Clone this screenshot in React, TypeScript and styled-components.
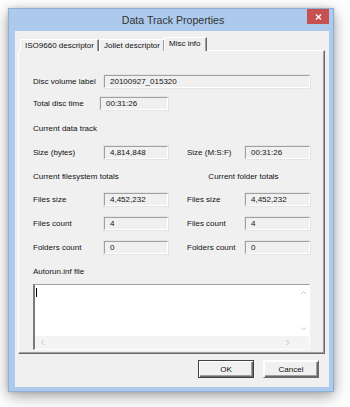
import React from "react";
import styled, { createGlobalStyle } from "styled-components";

const Global = createGlobalStyle`
  html, body { margin: 0; padding: 0; background: #ffffff; }
  body { width: 350px; height: 407px; overflow: hidden; font-family: "Liberation Sans", Arial, sans-serif; }
  #root { width: 350px; height: 407px; }
`;

const Page = styled.div`
  width: 350px;
  height: 407px;
  padding: 8px 0 0 8px;
  box-sizing: border-box;
`;

const Window = styled.div`
  width: 326px;
  height: 384px;
  box-sizing: border-box;
  background: #adcaec;
  border: 1px solid #8fb0d6;
  padding: 0 4px 4px 6px;
  display: flex;
  flex-direction: column;
  box-shadow: 0 4px 14px rgba(0, 0, 0, 0.38), 0 0 3px rgba(0, 0, 0, 0.15);
`;

const TitleBar = styled.div`
  height: 22px;
  display: grid;
  grid-template-columns: 1fr auto 1fr;
  align-items: start;
  flex-shrink: 0;
`;

const Title = styled.div`
  grid-column: 2;
  font-family: "Liberation Sans", Arial, sans-serif;
  font-size: 10.6px;
  color: #333333;
  line-height: 22px;
  padding-left: 2px;
`;

const CloseButton = styled.div`
  grid-column: 3;
  justify-self: end;
  width: 22px;
  height: 15px;
  background: #c75050;
  display: flex;
  align-items: center;
  justify-content: center;
`;

const Client = styled.div`
  flex: 1;
  background: #f0f0f0;
  display: flex;
  flex-direction: column;
  padding: 6px 4px 0 3px;
`;

const TabRow = styled.div`
  display: flex;
  align-items: flex-end;
  height: 14px;
  padding-left: 2px;
  position: relative;
  z-index: 1;
  margin-bottom: -1px;
`;

const Tab = styled.div<{ $active?: boolean }>`
  box-sizing: border-box;
  height: ${(p) => (p.$active ? "14px" : "12px")};
  padding: ${(p) => (p.$active ? "1px 5px 0 4px" : "1px 4px 0 4px")};
  margin-left: ${(p) => (p.$active ? "-1px" : "0")};
  font-size: 8px;
  line-height: 10px;
  color: #111;
  background: #f0f0f0;
  border-top: 1px solid #ffffff;
  border-left: 1px solid #ffffff;
  border-right: 1px solid #696969;
  box-shadow: inset -1px 0 0 #a0a0a0;
  white-space: nowrap;
`;

const Panel = styled.div`
  box-sizing: border-box;
  height: 304px;
  border-top: 1px solid #ffffff;
  border-left: 1px solid #ffffff;
  border-right: 1px solid #696969;
  border-bottom: 1px solid #696969;
  box-shadow: inset -1px -1px 0 #a0a0a0;
  padding: 0 14px 0 14px;
  display: flex;
  flex-direction: column;
`;

const Line = styled.div<{ $mt: number }>`
  margin-top: ${(p) => p.$mt}px;
  display: grid;
  grid-template-columns: 71px 64px 19px 58px 65px;
  align-items: center;
  height: 13px;
`;

const Label = styled.div<{ $col?: number }>`
  grid-column: ${(p) => p.$col ?? 1};
  font-size: 8px;
  color: #111;
  white-space: nowrap;
`;

const Heading = styled.div<{ $center?: boolean }>`
  grid-column: ${(p) => (p.$center ? "4 / 6" : "1 / 3")};
  text-align: ${(p) => (p.$center ? "center" : "left")};
  padding-right: ${(p) => (p.$center ? "10px" : "0")};
  font-size: 8px;
  color: #111;
  white-space: nowrap;
`;

const Field = styled.div<{ $col?: number; $span?: number; $shift?: number; $w?: number }>`
  grid-column: ${(p) => `${p.$col ?? 2} / span ${p.$span ?? 1}`};
  margin-left: ${(p) => p.$shift ?? 0}px;
  ${(p) => (p.$w ? `width: ${p.$w}px;` : "")}
  box-sizing: border-box;
  height: 13px;
  border-top: 1px solid #a0a0a0;
  border-left: 1px solid #a0a0a0;
  border-right: 1px solid #ffffff;
  border-bottom: 1px solid #ffffff;
  box-shadow: 0 0 0 0.5px #d8d8d8;
  background: #f0f0f0;
  font-size: 8px;
  line-height: 11px;
  padding-left: 5px;
  color: #111;
  white-space: nowrap;
`;

const Memo = styled.div`
  margin-top: 6px;
  box-sizing: border-box;
  width: 277px;
  height: 66px;
  border-top: 1px solid #a0a0a0;
  border-left: 2px solid #7a7a7a;
  border-right: 1px solid #ffffff;
  border-bottom: 1px solid #ffffff;
  display: grid;
  grid-template-columns: 1fr 12px;
  grid-template-rows: 1fr 13px;
  background: #ffffff;
`;

const MemoText = styled.div`
  padding: 3px 0 0 1px;
`;

const Caret = styled.div`
  width: 1px;
  height: 9px;
  background: #000;
`;

const VScroll = styled.div`
  display: flex;
  flex-direction: column;
  justify-content: space-between;
  align-items: center;
  padding: 5px 0 4px;
  background: #ffffff;
`;

const HScroll = styled.div`
  grid-column: 1 / 3;
  display: flex;
  justify-content: space-between;
  align-items: center;
  padding: 0 18px 0 5px;
  background: #f4f4f4;
`;

const ButtonRow = styled.div`
  display: flex;
  justify-content: flex-end;
  gap: 9px;
  padding: 6px 6px 0 0;
`;

const Button = styled.div<{ $default?: boolean }>`
  box-sizing: border-box;
  width: 56px;
  height: 18px;
  display: flex;
  align-items: center;
  justify-content: center;
  font-size: 8px;
  color: #111;
  background: #f0f0f0;
  border: 1px solid;
  box-shadow: inset 1px 1px 0 #ffffff, inset -1px -1px 0 #696969, inset -2px -2px 0 #a0a0a0;
  border-top-color: ${(p) => (p.$default ? "#404040" : "#ffffff")};
  border-left-color: ${(p) => (p.$default ? "#404040" : "#ffffff")};
  border-right-color: ${(p) => (p.$default ? "#404040" : "#696969")};
  border-bottom-color: ${(p) => (p.$default ? "#404040" : "#696969")};
`;

const Chevron = ({ dir }: { dir: "up" | "down" | "left" | "right" }) => {
  const d =
    dir === "up"
      ? "M1 4 L3.5 1.5 L6 4"
      : dir === "down"
      ? "M1 1.5 L3.5 4 L6 1.5"
      : dir === "left"
      ? "M4 1 L1.5 3.5 L4 6"
      : "M1.5 1 L4 3.5 L1.5 6";
  const w = dir === "up" || dir === "down" ? 7 : 6;
  const h = dir === "up" || dir === "down" ? 6 : 7;
  return (
    <svg width={w} height={h} viewBox={`0 0 ${w} ${h}`}>
      <path d={d} fill="none" stroke="#c4c4c4" strokeWidth="1" />
    </svg>
  );
};

export default function App() {
  return (
    <Page>
      <Global />
      <Window>
        <TitleBar>
          <Title>Data Track Properties</Title>
          <CloseButton>
            <svg width="7" height="6" viewBox="0 0 7 6">
              <path d="M1 0.5 L6 5.5 M6 0.5 L1 5.5" stroke="#ffffff" strokeWidth="1.4" />
            </svg>
          </CloseButton>
        </TitleBar>
        <Client>
          <TabRow>
            <Tab>ISO9660 descriptor</Tab>
            <Tab>Joliet descriptor</Tab>
            <Tab $active>Misc info</Tab>
          </TabRow>
          <Panel>
            <Line $mt={24}>
              <Label>Disc volume label</Label>
              <Field $col={2} $span={4}>20100927_015320</Field>
            </Line>
            <Line $mt={9}>
              <Label>Total disc time</Label>
              <Field $shift={-4} $w={68}>00:31:26</Field>
            </Line>
            <Line $mt={12}>
              <Heading>Current data track</Heading>
            </Line>
            <Line $mt={11}>
              <Label>Size (bytes)</Label>
              <Field>4,814,848</Field>
              <Label $col={4}>Size (M:S:F)</Label>
              <Field $col={5}>00:31:26</Field>
            </Line>
            <Line $mt={11}>
              <Heading>Current filesystem totals</Heading>
              <Heading $center>Current folder totals</Heading>
            </Line>
            <Line $mt={10}>
              <Label>Files size</Label>
              <Field>4,452,232</Field>
              <Label $col={4}>Files size</Label>
              <Field $col={5}>4,452,232</Field>
            </Line>
            <Line $mt={11}>
              <Label>Files count</Label>
              <Field>4</Field>
              <Label $col={4}>Files count</Label>
              <Field $col={5}>4</Field>
            </Line>
            <Line $mt={11}>
              <Label>Folders count</Label>
              <Field>0</Field>
              <Label $col={4}>Folders count</Label>
              <Field $col={5}>0</Field>
            </Line>
            <Line $mt={11}>
              <Heading>Autorun.inf file</Heading>
            </Line>
            <Memo>
              <MemoText>
                <Caret />
              </MemoText>
              <VScroll>
                <Chevron dir="up" />
                <Chevron dir="down" />
              </VScroll>
              <HScroll>
                <Chevron dir="left" />
                <Chevron dir="right" />
              </HScroll>
            </Memo>
          </Panel>
          <ButtonRow>
            <Button $default>OK</Button>
            <Button>Cancel</Button>
          </ButtonRow>
        </Client>
      </Window>
    </Page>
  );
}
